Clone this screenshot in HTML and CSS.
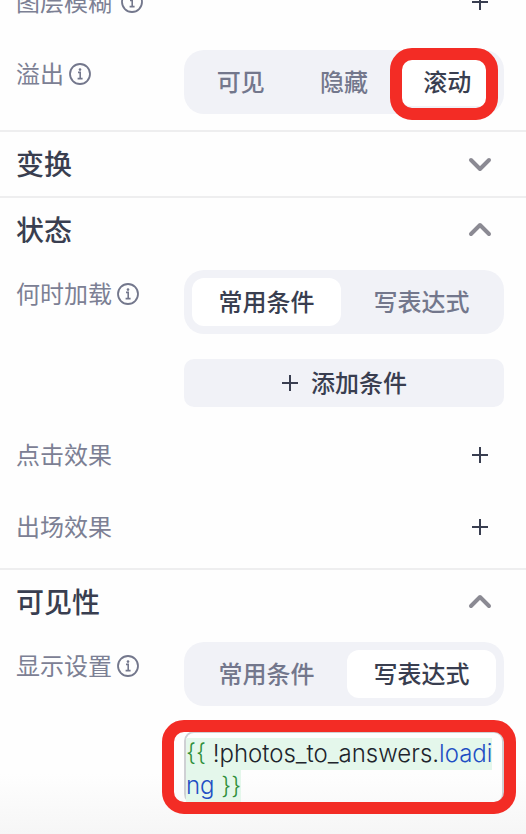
FILE: index.html
```
<!DOCTYPE html>
<html lang="zh-CN">
<head>
    <meta charset="UTF-8">
    <meta name="viewport" content="width=device-width, initial-scale=1.0">
    <title>组件设置</title>
    <link rel="stylesheet" href="styles.css">
</head>
<body>

    <!-- 图标 -->
    <svg class="sprite" aria-hidden="true">
        <symbol id="icon-info" viewBox="0 0 22 22">
            <circle cx="11" cy="11" r="10" fill="none" stroke="currentColor" stroke-width="1.8"/>
            <circle cx="11" cy="6.6" r="1.3" fill="currentColor"/>
            <path d="M9 9.4H11.2V15.4M8.6 15.6H13.6" fill="none" stroke="currentColor" stroke-width="1.6"/>
        </symbol>
        <symbol id="icon-plus" viewBox="0 0 18 18">
            <path d="M9 1V17M1 9H17" fill="none" stroke="currentColor" stroke-width="2"/>
        </symbol>
        <symbol id="icon-arrow" viewBox="0 0 24 24">
            <path d="M3 8L12 17L21 8" fill="none" stroke="currentColor" stroke-width="4" stroke-linecap="round" stroke-linejoin="round"/>
        </symbol>
    </svg>

    <main class="panel">
        <section class="section section-first">
            <div class="row-line">
                <span class="label label-wide">图层模糊
                    <svg class="info"><use href="#icon-info"/></svg>
                </span>
                <button class="btn-icon" aria-label="添加图层模糊"><svg class="plus"><use href="#icon-plus"/></svg></button>
            </div>
            <div class="row">
                <span class="label" id="label-overflow">溢出
                    <svg class="info"><use href="#icon-info"/></svg>
                </span>
                <div class="segment" role="group" aria-labelledby="label-overflow">
                    <button>可见</button>
                    <button>隐藏</button>
                    <button class="active marked">滚动</button>
                </div>
            </div>
        </section>

        <section class="section">
            <div class="header">
                <h2>变换</h2>
                <button class="btn-icon" aria-label="展开变换"><svg class="arrow"><use href="#icon-arrow"/></svg></button>
            </div>
        </section>

        <section class="section">
            <div class="header">
                <h2>状态</h2>
                <button class="btn-icon" aria-label="收起状态"><svg class="arrow arrow-up"><use href="#icon-arrow"/></svg></button>
            </div>
            <div class="content">
                <div class="row">
                    <span class="label" id="label-load">何时加载
                        <svg class="info"><use href="#icon-info"/></svg>
                    </span>
                    <div class="field">
                        <div class="segment" role="group" aria-labelledby="label-load">
                            <button class="active">常用条件</button>
                            <button>写表达式</button>
                        </div>
                        <button class="btn-add"><svg class="plus"><use href="#icon-plus"/></svg><span>添加条件</span></button>
                    </div>
                </div>
                <div class="row-line">
                    <span class="label">点击效果</span>
                    <button class="btn-icon" aria-label="添加点击效果"><svg class="plus"><use href="#icon-plus"/></svg></button>
                </div>
                <div class="row-line">
                    <span class="label">出场效果</span>
                    <button class="btn-icon" aria-label="添加出场效果"><svg class="plus"><use href="#icon-plus"/></svg></button>
                </div>
            </div>
        </section>

        <section class="section">
            <div class="header">
                <h2>可见性</h2>
                <button class="btn-icon" aria-label="收起可见性"><svg class="arrow arrow-up"><use href="#icon-arrow"/></svg></button>
            </div>
            <div class="content">
                <div class="row">
                    <span class="label" id="label-show">显示设置
                        <svg class="info"><use href="#icon-info"/></svg>
                    </span>
                    <div class="field">
                        <div class="segment" role="group" aria-labelledby="label-show">
                            <button>常用条件</button>
                            <button class="active">写表达式</button>
                        </div>
                        <div class="editor marked" role="textbox" aria-multiline="true" aria-labelledby="label-show" contenteditable="true" spellcheck="false"><span class="brace">{{</span><span class="name"> !photos_to_answers.</span><span class="prop">loading</span><span class="brace"> }}</span></div>
                    </div>
                </div>
            </div>
        </section>
    </main>

</body>
</html>
```
FILE: styles.css
```
* {
    box-sizing: border-box;
}

body {
    font-family: "Noto Sans CJK SC", sans-serif;
    font-size: 24px;
    line-height: 32px;
    color: #393e50;
    background: linear-gradient(to top, #f6f6f6, #fefefe 60px) fixed;
    margin: 0;
    overflow: hidden;
}

button {
    font: inherit;
    color: inherit;
    background: none;
    border: none;
    padding: 0;
    cursor: pointer;
}

svg {
    display: block;
    flex: none;
}

.sprite {
    display: none;
}

.section {
    padding: 0 22px 0 16px;
    border-bottom: 2px solid #eeeeef;
}

.section:last-child {
    border-bottom: none;
}

/* 面板已向下滚动,首行只露出一部分 */
.section-first {
    margin-top: -34px;
    padding-bottom: 16px;
}

.section-first .row-line {
    margin-bottom: 12px;
}

.header {
    display: flex;
    align-items: center;
    justify-content: space-between;
    height: 64px;
}

h2 {
    font-size: 28px;
    font-weight: 500;
    margin: 0;
    padding-bottom: 2px;
}

.content {
    padding: 8px 0 5px;
}

.row {
    display: grid;
    grid-template-columns: 168px 1fr;
    align-items: start;
}

.content .row {
    margin-bottom: 12px;
}

.row-line {
    display: flex;
    align-items: center;
    justify-content: space-between;
    height: 72px;
}

.label {
    display: flex;
    align-items: center;
    gap: 5px;
    height: 48px;
    padding-bottom: 2px;
    color: #7c8094;
}

.label-wide {
    gap: 9px;
}

.info {
    width: 22px;
    height: 22px;
    margin-top: 2px;
    color: #73778c;
}

.plus {
    width: 18px;
    height: 18px;
}

.arrow {
    width: 24px;
    height: 24px;
    color: #8b8a93;
}

.arrow-up {
    transform: rotate(180deg);
}

.btn-icon {
    display: flex;
    align-items: center;
    justify-content: center;
    width: 48px;
    height: 48px;
}

.field {
    display: flex;
    flex-direction: column;
    gap: 25px;
    min-width: 0;
}

.segment {
    display: flex;
    gap: 6px;
    height: 64px;
    padding: 8px;
    border-radius: 20px;
    background-color: #f1f2f7;
}

.segment button {
    flex: 1;
    padding-bottom: 2px;
    border-radius: 12px;
    font-weight: 500;
    color: #73778c;
}

.segment .active {
    background-color: #ffffff;
    color: #393e50;
}

.btn-add {
    display: flex;
    align-items: center;
    justify-content: center;
    gap: 12px;
    height: 48px;
    border-radius: 10px;
    background-color: #f1f2f7;
    font-weight: 500;
}

.btn-add span {
    padding-bottom: 2px;
}

.editor {
    padding-top: 5px;
    border: 2px solid #cfd0d4;
    border-radius: 10px;
    font-family: Inter, "Noto Sans CJK SC", sans-serif;
    font-weight: 300;
    word-break: break-all;
    outline: none;
}

.editor span {
    padding: 1px 0 2px;
    background-color: #e4f7eb;
}

.name {
    color: #20242c;
}

.brace {
    color: #2f8f3a;
}

.prop {
    color: #1f4fc4;
}

/* 红色标注框 */
.marked {
    position: relative;
}

.marked::after {
    content: "";
    position: absolute;
    inset: -10px -2px -14px -9px;
    border: 12px solid #f32c25;
    border-radius: 22px;
    pointer-events: none;
}

.editor.marked::after {
    inset: -13px -14px -12px -24px;
}
```
